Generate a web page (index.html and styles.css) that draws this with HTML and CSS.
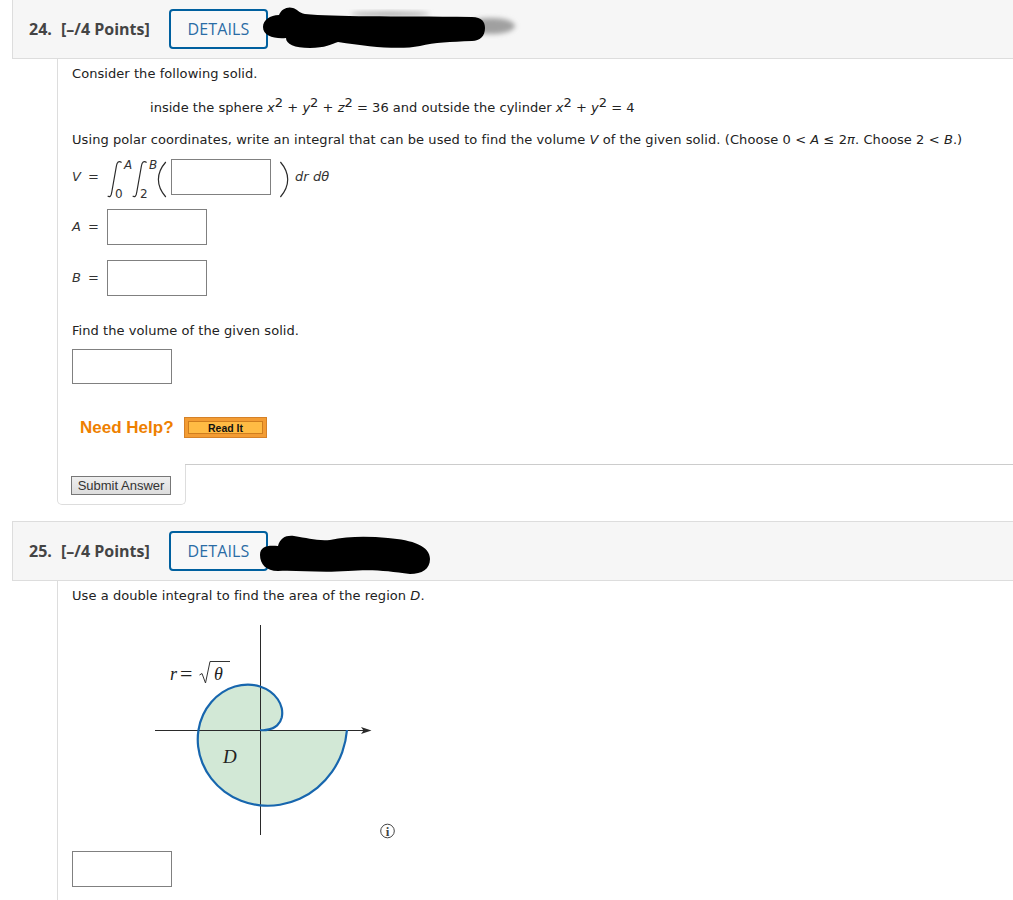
FILE: index.html
```html
<!DOCTYPE html>
<html lang="en">
<head>
<meta charset="utf-8">
<title>Questions 24 and 25</title>
<link rel="stylesheet" href="styles.css">
</head>
<body>
<section class="question">
  <header class="q-head">
    <strong class="q-num">24.</strong>
    <strong class="q-points">[–/4 Points]</strong>
    <button class="details" type="button">DETAILS</button>
    <svg class="redact redact-one" viewBox="0 0 270 60" aria-hidden="true">
      <defs><filter id="smudge" x="-30%" y="-60%" width="160%" height="220%"><feGaussianBlur stdDeviation="2.6"/></filter></defs>
      <ellipse class="smudge" cx="231" cy="26" rx="24" ry="8" filter="url(#smudge)"/>
      <ellipse class="smudge" cx="130" cy="14" rx="40" ry="2" filter="url(#smudge)"/>
      <path d="M3 27C3 20 10 15 19 15C21 9 28 6 33 8C37 9 39 13 45 14C75 17 130 16 212 17C222 17 225 22 225 28C225 36 220 41 212 41C190 42 175 42 160 46C140 50 110 47 78 42C72 44 65 48 50 48C34 48 26 44 26 38C14 39 3 36 3 27Z"/>
    </svg>
  </header>
  <div class="q-body body-first">
    <p class="line">Consider the following solid.</p>
    <p class="line statement">inside the sphere <i>x</i><sup>2</sup> + <i>y</i><sup>2</sup> + <i>z</i><sup>2</sup> = 36 and outside the cylinder <i>x</i><sup>2</sup> + <i>y</i><sup>2</sup> = 4</p>
    <p class="line prompt">Using polar coordinates, write an integral that can be used to find the volume <i>V</i> of the given solid. (Choose 0 &lt; <i>A</i> ≤ 2<i>π</i>. Choose 2 &lt; <i>B</i>.)</p>
    <div class="eq eq-main">
      <span class="eq-label"><i>V</i><span>=</span></span>
      <svg class="integrals" viewBox="0 -1 64 46" aria-label="double integral from 0 to A and 2 to B">
        <path class="ink" d="M1.7 40.8C3.6 42.8 5.2 41.4 5.8 37L10.4 11C11 7.2 12.8 5.6 15.6 7.4"/>
        <path class="ink" d="M26.7 40.8C28.6 42.8 30.2 41.4 30.8 37L35.4 11C36 7.2 37.8 5.6 40.6 7.4"/>
        <path class="ink" d="M59.8 7C54.5 13 52.4 18 52.4 24.5C52.4 31 54.5 36 59.8 42"/>
        <text class="limit" x="18" y="13.5" font-style="italic">A</text>
        <text class="limit" x="43" y="13.5" font-style="italic">B</text>
        <text class="limit" x="9" y="43">0</text>
        <text class="limit" x="34" y="43">2</text>
      </svg>
      <input class="answer" type="text" aria-label="integrand">
      <svg class="paren" viewBox="0 -1 20 46" aria-hidden="true">
        <path class="ink" d="M9.4 7C14.6 13 16.7 18 16.7 24.5C16.7 31 14.6 36 9.4 42"/>
      </svg>
      <span class="diff"><i>dr dθ</i></span>
    </div>
    <div class="eq eq-a">
      <span class="eq-label"><i>A</i><span>=</span></span>
      <input class="answer" type="text" aria-label="A">
    </div>
    <div class="eq eq-b">
      <span class="eq-label"><i>B</i><span>=</span></span>
      <input class="answer" type="text" aria-label="B">
    </div>
    <p class="line find">Find the volume of the given solid.</p>
    <input class="answer volume" type="text" aria-label="volume">
    <div class="help">
      <span class="help-label">Need Help?</span>
      <button class="read-it" type="button"><span>Read It</span></button>
    </div>
  </div>
  <footer class="q-foot">
    <div class="submit-cell"><button class="submit" type="button">Submit Answer</button></div>
    <div class="foot-rest"></div>
  </footer>
</section>

<section class="question second">
  <header class="q-head">
    <strong class="q-num">25.</strong>
    <strong class="q-points">[–/4 Points]</strong>
    <button class="details" type="button">DETAILS</button>
    <svg class="redact redact-two" viewBox="0 0 180 60" aria-hidden="true">
      <path d="M2 33C2 24 10 23 20 24C22 16 28 13 36 14C50 16 58 19 72 18C90 14 110 14 130 16C155 18 172 24 172 37C172 47 164 52 152 52C130 49 115 47 90 49C60 51 40 48 20 49C8 49 2 42 2 33Z"/>
    </svg>
  </header>
  <div class="q-body body-last">
    <p class="line">Use a double integral to find the area of the region <i>D</i>.</p>
    <svg class="figure" viewBox="0 0 280 230" role="img" aria-label="Polar region D bounded by r = square root of theta">
      <defs>
        <path id="spiral" d="M130 110A20 20 0 0 0 138.86 109.42A17 17 0 0 0 142.44 108.36A15 15 0 0 0 147.15 105.4A16 16 0 0 0 151.75 97.45A22 22 0 0 0 151.74 88.26A27 27 0 0 0 147.76 79.25A33 33 0 0 0 140.28 71.65A38 38 0 0 0 130 66.51A43 43 0 0 0 117.84 64.62A47 47 0 0 0 104.89 66.51A50 50 0 0 0 92.33 72.33A53 53 0 0 0 81.37 81.93A56 56 0 0 0 73.12 94.76A58 58 0 0 0 68.49 110A61 61 0 0 0 68.16 126.57A64 64 0 0 0 72.47 143.22A66 66 0 0 0 81.37 158.63A69 69 0 0 0 94.49 171.51A71 71 0 0 0 111.05 180.71A73 73 0 0 0 130 185.33A75 75 0 0 0 150.03 184.75A78 78 0 0 0 169.7 178.76A80 80 0 0 0 187.53 167.53A82 82 0 0 0 202.12 151.64A84 84 0 0 0 212.25 132.04A86 86 0 0 0 216.98 110"/>
      </defs>
      <use href="#spiral" class="region"/>
      <path class="axis" d="M130.5 5V215M25 110.5H234"/>
      <path class="arrow" d="M241.5 110.5L231 107L233.5 110.5L231 114Z"/>
      <use href="#spiral" class="curve"/>
      <text class="serif" x="40" y="60" font-style="italic">r</text>
      <text class="serif equals" x="50" y="61">=</text>
      <path class="radical" d="M69.5 55L72 53.5L75.5 63L80 41.5H100"/>
      <text class="serif" x="84" y="60" font-style="italic">θ</text>
      <text class="serif big" x="93" y="143" font-style="italic">D</text>
      <circle class="info" cx="257.5" cy="211" r="6.8"/>
      <text class="info-i" x="257.5" y="215.5" text-anchor="middle">i</text>
    </svg>
    <input class="answer tail" type="text" aria-label="area">
  </div>
</section>
</body>
</html>
```

FILE: styles.css
```css
* { box-sizing: border-box; }

html, body { margin: 0; padding: 0; background: #fff; }

body {
  font-family: "DejaVu Sans", Verdana, sans-serif;
  font-size: 13px;
  line-height: 16px;
  letter-spacing: .06px;
  color: #222;
  overflow-x: hidden;
}

.q-head {
  position: relative;
  display: flex;
  align-items: center;
  height: 59px;
  margin-left: 12px;
  padding-left: 16px;
  background: #f6f6f6;
  border-left: 1px solid #ddd;
  border-bottom: 1px solid #ddd;
  font-family: "Open Sans", "Noto Sans", sans-serif;
  letter-spacing: 0;
}

.second { margin-top: 16px; }
.second .q-head { height: 60px; border: 1px solid #ddd; border-right: 0; }

.q-num { font-size: 16px; font-weight: 700; color: #444; width: 32px; }
.q-points { font-size: 16px; font-weight: 700; color: #444; width: 108px; }

.details {
  width: 99px;
  height: 40px;
  padding: 0;
  background: #f8f8f8;
  border: 2px solid #00609f;
  border-radius: 4px;
  font: 400 16px "Open Sans", "Noto Sans", sans-serif;
  letter-spacing: .15px;
  color: #2a6ca5;
}

.redact { position: absolute; fill: #000; }
.redact-one { left: 247px; top: 0; width: 270px; height: 60px; }
.redact-two { left: 245px; top: 0; width: 180px; height: 60px; }
.smudge { fill: #a0a0a0; }

.q-body {
  margin-left: 57px;
  padding: 7px 0 0 14px;
  border-left: 1px solid #ddd;
}
.body-first { padding-bottom: 26px; }
.body-last { padding-bottom: 13px; }

.line { margin: 0; }
.statement { margin-top: 18px; padding-left: 78px; letter-spacing: .03px; }
.prompt { margin-top: 16px; white-space: nowrap; letter-spacing: .08px; }
.find { margin-top: 27px; }

sup { font-size: 13px; line-height: 0; vertical-align: 5px; }

.eq { display: flex; align-items: center; }
.eq-main { margin-top: 6px; height: 46px; }
.eq-a { margin-top: 9px; }
.eq-b { margin-top: 15px; }
.eq-label {
  display: flex;
  justify-content: space-between;
  width: 27px;
  margin-right: 8px;
  color: #333;
}
.eq-label i { width: 14px; }

.answer {
  display: block;
  width: 100px;
  height: 36px;
  margin: 0;
  padding: 0;
  background: #fff;
  border: 1px solid #808080;
  border-radius: 0;
}

.integrals { display: block; width: 64px; height: 46px; margin-left: -1px; margin-right: 1px; }
.paren { display: block; width: 20px; height: 46px; }
.diff { margin-left: 4px; color: #333; }

.ink { fill: none; stroke: #2a2a2a; stroke-width: 1.2; }
.limit { font-family: "DejaVu Sans", sans-serif; font-size: 12px; fill: #333; }

.volume { height: 35px; margin-top: 10px; }

.help {
  display: flex;
  align-items: center;
  height: 21px;
  margin-top: 33px;
  padding-left: 8px;
}
.help-label {
  width: 104px;
  font: 700 17px "Liberation Sans", Arial, sans-serif;
  letter-spacing: 0;
  color: #ee8000;
}
.read-it {
  display: flex;
  width: 83px;
  height: 21px;
  padding: 3px;
  background: #f39c33;
  border: 1px solid #d58128;
}
.read-it span {
  flex: 1;
  height: 13px;
  background: #ffbb44;
  border: 1px solid #cf7d1e;
  font: 700 10.5px/12px "Liberation Sans", Arial, sans-serif;
  letter-spacing: 0;
  color: #111;
  text-align: center;
}

.q-foot { display: flex; margin-left: 57px; }
.submit-cell {
  width: 129px;
  height: 41px;
  padding: 12px 0 0 13px;
  border: 1px solid #ddd;
  border-top: 0;
  border-radius: 0 0 5px 5px;
}
.foot-rest { flex: 1; border-top: 1px solid #ccc; margin-left: -1px; }
.submit {
  display: block;
  width: 100px;
  height: 19px;
  padding: 0;
  background: linear-gradient(#eee, #ddd);
  border: 1px solid #777;
  border-radius: 0;
  font: 400 13px "Liberation Sans", Arial, sans-serif;
  letter-spacing: 0;
  color: #333;
}

.figure { display: block; width: 280px; height: 230px; margin: 16px 0 0 58px; }
.region { fill: #d2e8d6; stroke: none; }
.curve { fill: none; stroke: #1766ae; stroke-width: 2.2; }
.axis { fill: none; stroke: #2a2a2a; stroke-width: 1; }
.arrow { fill: #2a2a2a; }
.radical { fill: none; stroke: #333; stroke-width: 1; }
.serif { font-family: "Liberation Serif", serif; font-size: 18px; fill: #222; }
.equals { font-size: 22px; }
.big { font-size: 19px; }
.info { fill: #fff; stroke: #444; stroke-width: 1; }
.info-i { font-family: "Liberation Serif", serif; font-size: 13px; font-weight: 700; fill: #444; }

.tail { margin-top: 1px; }
```
